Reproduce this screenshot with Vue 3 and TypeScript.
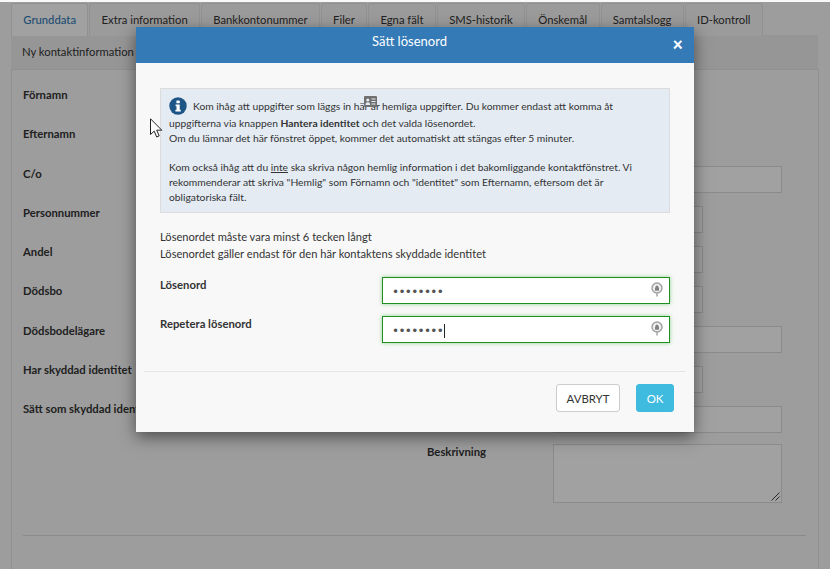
<script setup lang="ts">
const tabs: string[] = ['Grunddata', 'Extra information', 'Bankkontonummer', 'Filer', 'Egna fält', 'SMS-historik', 'Önskemål', 'Samtalslogg', 'ID-kontroll']
const labels: string[] = ['Förnamn', 'Efternamn', 'C/o', 'Personnummer', 'Andel', 'Dödsbo', 'Dödsbodelägare', 'Har skyddad identitet', 'Sätt som skyddad identitet']
const fields: { cls: string }[] = [
  { cls: 'full' }, { cls: 'short' }, { cls: 'short' }, { cls: 'short' },
  { cls: 'full' }, { cls: 'short' }, { cls: 'full' },
]
const pw = [{ label: 'Lösenord', caret: false }, { label: 'Repetera lösenord', caret: true }]
</script>

<template>
  <div class="page">
    <div class="tabs">
      <div v-for="(t, i) in tabs" :key="t" class="tab" :class="{ active: i === 0 }">{{ t }}</div>
    </div>
    <div class="subbar">Ny kontaktinformation</div>
    <div class="panel">
      <div class="cols">
        <div class="left">
          <div v-for="l in labels" :key="l" class="label">{{ l }}</div>
        </div>
        <div class="right">
          <div v-for="(f, i) in fields" :key="i" class="field" :class="f.cls"></div>
          <div class="descrow">
            <div class="desclabel">Beskrivning</div>
            <div class="textarea">
              <svg class="grip" width="9" height="9" viewBox="0 0 9 9"><path d="M0.5 8.5L8.5 0.5M4.5 8.5L8.5 4.5" stroke="#444" stroke-width="1" fill="none" /></svg>
            </div>
          </div>
        </div>
      </div>
      <div class="hr"></div>
    </div>

    <div class="backdrop"></div>

    <div class="modal">
      <div class="mhead">
        <span class="mtitle">Sätt lösenord</span>
        <span class="close">×</span>
      </div>
      <div class="mbody">
        <div class="info">
          <svg class="icircle" width="18" height="18" viewBox="0 0 18 18">
            <circle cx="9" cy="9" r="8.7" fill="#1d5587" />
            <rect x="7.4" y="3.4" width="3.4" height="2.9" rx="0.6" fill="#fff" />
            <path d="M6.6 7.4h4.1v5.4h1.1v1.8H6.4v-1.8h1.1V9.2H6.6z" fill="#fff" />
          </svg>
          <p class="line first">Kom ihåg att uppgifter som läggs in här är hemliga uppgifter. Du kommer endast att komma åt</p>
          <p class="line second">uppgifterna via knappen <b>Hantera identitet</b> och det valda lösenordet.</p>
          <p class="line">Om du lämnar det här fönstret öppet, kommer det automatiskt att stängas efter 5 minuter.</p>
          <p class="line gap">Kom också ihåg att du <u>inte</u> ska skriva någon hemlig information i det bakomliggande kontaktfönstret. Vi</p>
          <p class="line">rekommenderar att skriva "Hemlig" som Förnamn och "identitet" som Efternamn, eftersom det är</p>
          <p class="line">obligatoriska fält.</p>
          <svg class="idcard" width="13" height="11" viewBox="0 0 13 11">
            <rect width="13" height="11" rx="1" fill="#707070" />
            <circle cx="3.8" cy="4" r="1.6" fill="#e4ebf3" />
            <path d="M1.5 9c0-2 1-2.7 2.3-2.7S6.1 7 6.1 9z" fill="#e4ebf3" />
            <path d="M7.5 3h4M7.5 5.5h4M7.5 8h4" stroke="#e4ebf3" stroke-width="1" />
          </svg>
        </div>
        <p class="note n1">Lösenordet måste vara minst 6 tecken långt</p>
        <p class="note">Lösenordet gäller endast för den här kontaktens skyddade identitet</p>
        <div v-for="p in pw" :key="p.label" class="pwrow">
          <div class="pwlabel">{{ p.label }}</div>
          <div class="pwinput">
            <span class="dots">••••••••</span><span v-if="p.caret" class="caret"></span>
            <svg class="lock" width="12" height="15" viewBox="0 0 12 15">
              <circle cx="6" cy="6" r="5" fill="#eee" stroke="#a0a0a0" stroke-width="1.4" />
              <rect x="4" y="5.5" width="4" height="3.2" fill="#808080" />
              <circle cx="6" cy="5" r="1.5" fill="#808080" />
              <path d="M6 11v3.5" stroke="#a0a0a0" stroke-width="1.4" />
            </svg>
          </div>
        </div>
      </div>
      <div class="mfoot">
        <button class="btn cancel">AVBRYT</button>
        <button class="btn ok">OK</button>
      </div>
    </div>

    <svg class="cursor" width="13" height="20" viewBox="0 0 13 20">
      <path d="M0.5 0.8V16.5L4.2 13.1L6.7 19L9.2 17.9L6.7 12.2H11.8Z" fill="#fff" stroke="#222" stroke-width="1" stroke-linejoin="round" />
    </svg>
  </div>
</template>

<style scoped>
.page {
  position: relative;
  width: 830px;
  height: 569px;
  overflow: hidden;
  background: #f9f9f9;
  font-family: Lato, "Liberation Sans", sans-serif;
  color: #333;
  padding-top: 3px;
  box-sizing: border-box;
}
.tabs {
  display: flex;
  padding-left: 11px;
  height: 32px;
}
.tab {
  box-sizing: border-box;
  height: 33px;
  padding: 8px 11.3px 0;
  margin-right: 1px;
  background: #f6f6f6;
  border: 1px solid #e6e6e6;
  border-bottom: none;
  border-radius: 3px 3px 0 0;
  font-size: 11.25px;
  line-height: 15px;
  white-space: nowrap;
}
.tab.active {
  background: #fff;
  color: #337ab7;
  font-weight: 500;
}
.subbar {
  box-sizing: border-box;
  height: 34px;
  margin-left: 11px;
  width: 807px;
  background: #eee;
  padding: 9px 11px 0;
  font-size: 11.25px;
  line-height: 15px;
}
.panel {
  box-sizing: border-box;
  margin-left: 11px;
  width: 808px;
  height: 520px;
  border: 1px solid #e4e4e4;
  padding: 0 12px 0 11px;
}
.cols {
  display: flex;
  height: 465px;
}
.left {
  width: 404px;
  padding-top: 17px;
}
.label {
  height: 39.25px;
  font-size: 11.3px;
  line-height: 16px;
  font-weight: 700;
  white-space: nowrap;
}
.right {
  padding: 96px 0 0 126px;
  width: 229px;
  box-sizing: content-box;
}
.field {
  box-sizing: border-box;
  height: 27px;
  margin-bottom: 13px;
  background: #fff;
  border: 1px solid #ddd;
}
.field.full { width: 229px; }
.field.short { width: 150px; }
.descrow { position: relative; margin-top: -2px; }
.desclabel {
  position: absolute;
  left: -126px;
  top: 0;
  font-size: 11.3px;
  line-height: 16px;
  font-weight: 700;
}
.textarea {
  position: relative;
  box-sizing: border-box;
  width: 229px;
  height: 59px;
  background: #fff;
  border: 1px solid #ddd;
}
.grip { position: absolute; right: 1px; bottom: 1px; }
.hr {
  height: 1px;
  background: #ddd;
}
.backdrop {
  position: absolute;
  inset: 0;
  top: 2px;
  background: rgba(0, 0, 0, 0.37);
}
.modal {
  position: absolute;
  left: 136px;
  top: 27px;
  width: 558px;
  height: 405px;
  background: #f8f8f8;
  box-shadow: 0 5px 15px rgba(0, 0, 0, 0.5);
  display: flex;
  flex-direction: column;
}
.mhead {
  position: relative;
  box-sizing: border-box;
  height: 36px;
  padding-right: 11px;
  background: #337ab7;
  color: #fff;
  text-align: center;
  font-size: 13px;
  line-height: 29px;
  flex: none;
}
.close {
  position: absolute;
  right: 11px;
  top: 4px;
  font-size: 18px;
  line-height: 26px;
  font-weight: 900;
}
.mbody {
  padding: 25px 24px 0;
  flex: 1;
}
.info {
  position: relative;
  box-sizing: border-box;
  height: 125px;
  background: #e4ebf3;
  border: 1px solid #dcdcdc;
  padding: 10px 8px 0 8px;
}
.icircle { position: absolute; left: 8px; top: 8px; }
.idcard { position: absolute; left: 203px; top: 7px; }
.line {
  margin: 0;
  font-size: 10.3px;
  line-height: 15px;
  white-space: nowrap;
}
.line.first { padding-left: 24px; margin-bottom: 2px; }
.line.gap { margin-top: 14px; }
.line b { font-weight: 700; }
.note {
  margin: 0;
  font-size: 11.15px;
  line-height: 17px;
}
.note.n1 { margin-top: 15px; }
.pwrow {
  display: flex;
  height: 39px;
}
.note + .pwrow { margin-top: 15px; }
.pwlabel {
  width: 222px;
  font-size: 11.3px;
  font-weight: 700;
  line-height: 16px;
}
.pwinput {
  position: relative;
  box-sizing: border-box;
  width: 288px;
  height: 27px;
  background: #fff;
  border: 1px solid #1f8f1f;
  box-shadow: 0 0 4px rgba(60, 180, 60, 0.55);
  padding: 2px 0 0 9px;
  display: flex;
  align-items: center;
}
.dots {
  font-family: "DejaVu Sans", sans-serif;
  font-size: 12px;
  letter-spacing: -0.7px;
  color: #555;
}
.caret {
  width: 1px;
  height: 14px;
  background: #222;
  margin-left: 1px;
}
.lock { position: absolute; right: 6px; top: 4px; }
.mfoot {
  margin: 0 8px;
  border-top: 1px solid #e5e5e5;
  height: 61px;
  box-sizing: border-box;
  padding: 12px 12px 0 0;
  display: flex;
  justify-content: flex-end;
  gap: 16px;
  flex: none;
}
.btn {
  box-sizing: border-box;
  height: 28px;
  font-family: Lato, "Liberation Sans", sans-serif;
  font-size: 11.4px;
  padding: 0;
  border-radius: 3px;
}
.cancel {
  width: 64px;
  background: #fff;
  border: 1px solid #ccc;
  color: #333;
}
.ok {
  width: 38px;
  background: #3fbbe0;
  border: 1px solid #3fbbe0;
  color: #fff;
}
.cursor { position: absolute; left: 150px; top: 118px; }
</style>
